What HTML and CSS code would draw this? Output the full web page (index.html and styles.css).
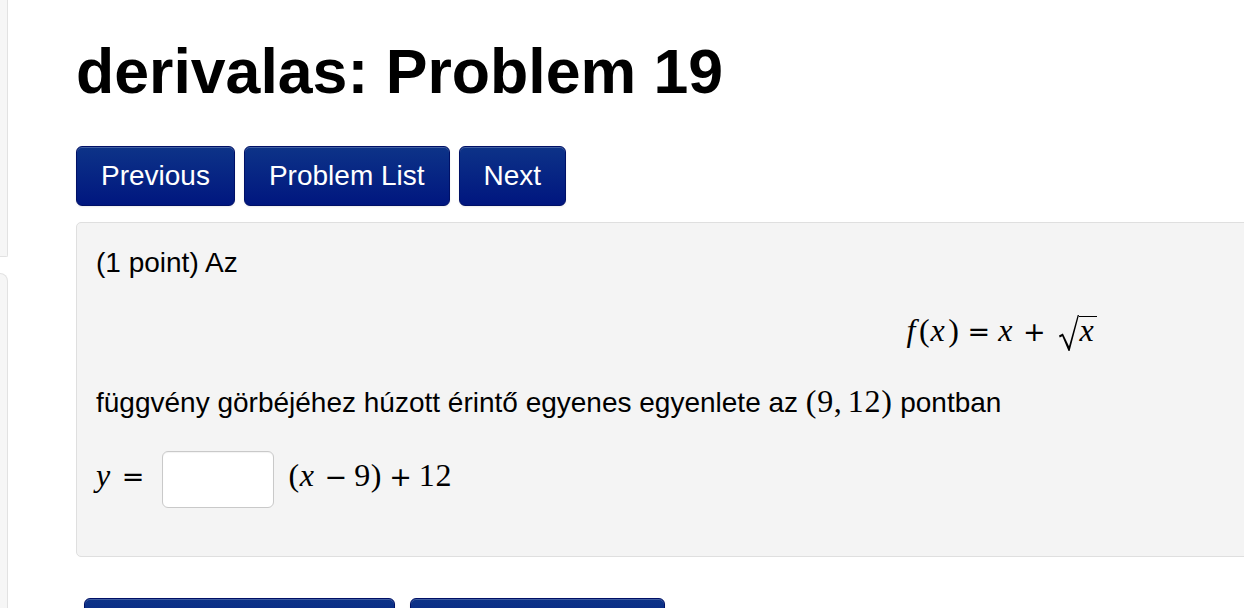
FILE: index.html
```html
<!DOCTYPE html>
<html lang="hu">
<head>
    <meta charset="UTF-8">
    <meta name="viewport" content="width=device-width, initial-scale=1.0">
    <title>derivalas: Problem 19</title>
    <link rel="stylesheet" href="styles.css">
</head>
<body>
    <div class="page">
        <aside class="sidebar">
            <div class="side-box side-top"></div>
            <div class="side-box side-bottom"></div>
        </aside>

        <main class="main">
            <h1 class="title">derivalas: Problem 19</h1>

            <nav class="nav-buttons">
                <a class="btn" href="#">Previous</a>
                <a class="btn" href="#">Problem List</a>
                <a class="btn" href="#">Next</a>
            </nav>

            <div class="problem">
                <p class="line">(1 point) Az</p>

                <div class="display math">
                    <i>f</i>(<i>x</i>)<span class="rel">=</span><i>x</i><span class="bin">+</span><span class="sqrt"><svg class="radical" width="20" height="36" viewBox="0 0 20 36"><path d="M0 20.6 L3.9 18.4 L10 31.2 L18.7 0 L20 0 L10.6 36 L9.5 36 L3.3 21.3 L0.7 22.4 Z" fill="#000"/></svg><span class="radicand"><i>x</i></span></span>
                </div>

                <p class="line line-2">függvény görbéjéhez húzott érintő egyenes egyenlete az <span class="math inline">(9,<span class="thin"></span>12)</span> pontban</p>

                <div class="answer-row">
                    <span class="math answer-text"><i>y</i><span class="rel">=</span></span>
                    <input class="answer-input" type="text">
                    <span class="math answer-text">(<i>x</i><span class="bin">−</span>9)<span class="bin">+</span>12</span>
                </div>
            </div>

            <div class="submit-buttons">
                <button class="btn btn-preview">Preview My Answers</button>
                <button class="btn btn-submit">Submit Answers</button>
            </div>
        </main>
    </div>
</body>
</html>
```

FILE: styles.css
```css
html, body {
    overflow: hidden;
}
body {
    margin: 0;
    font-family: "Liberation Sans", Arial, Helvetica, sans-serif;
    color: #000;
    background-color: #fff;
}
.page {
    display: flex;
    align-items: flex-start;
}

/* oldalsav, csak a jobb szele latszik */
.sidebar {
    width: 8px;
    flex-shrink: 0;
    display: flex;
    flex-direction: column;
    gap: 16px;
}
.side-box {
    box-sizing: border-box;
    background-color: #f6f6f6;
    border: 1px solid #e2e2e2;
    border-left: none;
}
.side-top {
    height: 257px;
    border-top: none;
    border-radius: 0 0 2px 0;
}
.side-bottom {
    height: 400px;
    border-radius: 0 9px 0 0;
}

.main {
    padding-left: 68px;
    flex: none;
}
.title {
    margin: 37px 0 0;
    font-size: 62.6px;
    line-height: 68px;
    font-weight: bold;
}

.nav-buttons {
    margin-top: 41px;
    display: flex;
    gap: 9px;
}
.btn {
    box-sizing: border-box;
    height: 60px;
    padding: 0 24px;
    display: flex;
    align-items: center;
    justify-content: center;
    font-family: inherit;
    font-size: 28px;
    color: #fff;
    text-decoration: none;
    white-space: nowrap;
    background: linear-gradient(#0d3388, #00167f);
    border: 1px solid #001066;
    border-radius: 6px;
    box-shadow: inset 0 1px 0 rgba(255, 255, 255, 0.22), 0 1px 2px rgba(0, 0, 0, 0.08);
    cursor: pointer;
}

.problem {
    margin-top: 16px;
    width: 1854px;
    box-sizing: border-box;
    padding: 21px 21px 48px 19px;
    background-color: #f4f4f4;
    border: 1px solid #dfdfdf;
    border-radius: 5px;
    font-size: 28px;
}
.line {
    margin: 0;
    line-height: 38px;
}
.line-2 {
    margin-top: 33px;
}

.math {
    font-family: "Liberation Serif", "Times New Roman", serif;
    font-size: 32px;
    letter-spacing: 0.02em;
}
.math i {
    padding-right: 3px;
}
.math.inline {
    line-height: 1;
}
.rel, .bin {
    font-family: "DejaVu Sans", sans-serif;
    font-size: 27px;
    letter-spacing: 0;
}
.rel {
    margin: 0 8px;
}
.bin {
    margin: 0 7px;
}
.thin {
    display: inline-block;
    width: 0.17em;
}
.display {
    margin-top: 29px;
    line-height: 38px;
    text-align: center;
}
.sqrt {
    margin-left: 6px;
    white-space: nowrap;
}
.radical {
    vertical-align: -10px;
}
.radicand {
    display: inline-block;
    line-height: 26px;
    border-top: 1.5px solid #000;
    padding-left: 1px;
}

.answer-row {
    margin-top: 29px;
    display: flex;
    align-items: center;
}
.answer-text {
    line-height: 38px;
    margin-top: -7px;
}
.answer-input {
    box-sizing: border-box;
    width: 112px;
    height: 57px;
    margin: 0 14px 0 10px;
    background-color: #fff;
    border: 1px solid #c9c9c9;
    border-radius: 6px;
    box-shadow: inset 0 1px 1px rgba(0, 0, 0, 0.05);
}

.submit-buttons {
    margin: 41px 0 0 8px;
    display: flex;
    gap: 15px;
}
.btn-preview {
    width: 311px;
    padding: 0;
}
.btn-submit {
    width: 255px;
    padding: 0;
}
```
